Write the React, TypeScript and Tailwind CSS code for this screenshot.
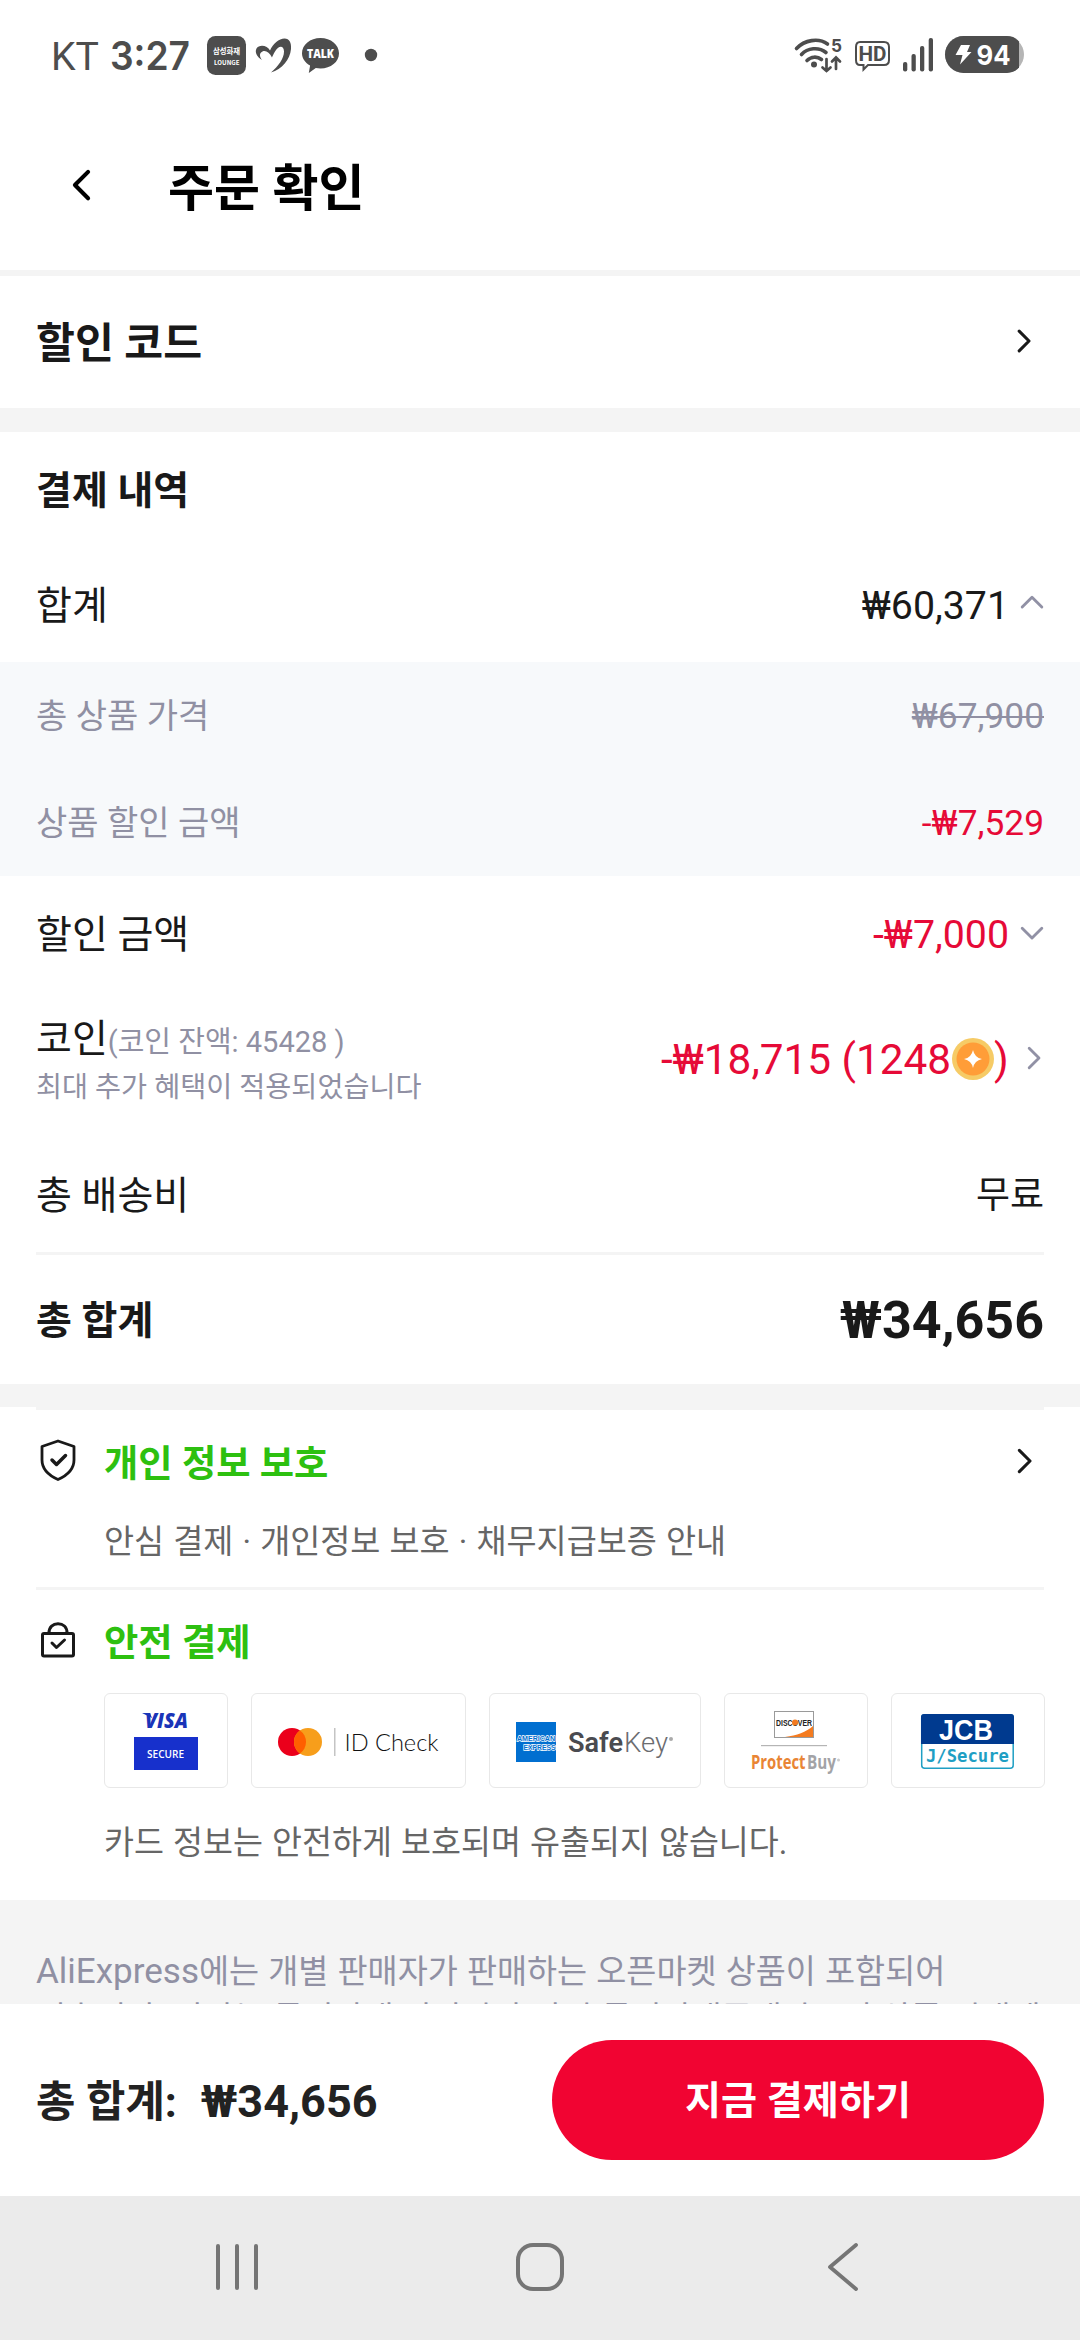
import type { ReactNode } from "react";

const GLYPHS = "spacingAndGlyphs";

type Dir = "left" | "right" | "up" | "down";

const CHEVRON_PATHS: Record<Dir, string> = {
  left: "M11 2 2 11l9 9",
  right: "M2 2l9 9-9 9",
  up: "M2 11l9-9 9 9",
  down: "M2 2l9 9 9-9",
};

function Chevron({ dir, className, stroke = 3 }: { dir: Dir; className?: string; stroke?: number }) {
  const vertical = dir === "up" || dir === "down";
  return (
    <svg viewBox={vertical ? "0 0 22 13" : "0 0 13 22"} fill="none" className={className}>
      <path
        d={CHEVRON_PATHS[dir]}
        stroke="currentColor"
        strokeWidth={stroke}
        strokeLinecap="round"
        strokeLinejoin="round"
      />
    </svg>
  );
}

function StatusBar() {
  return (
    <div className="flex h-[110px] items-center justify-between pl-[48px] pr-[56px] text-[#4d4d4d]">
      <svg width="344" height="64" viewBox="48 23 344 64" fill="#4d4d4d">
        <text x="51" y="69.500" fontSize="39.500" fontWeight="400" textLength="48" lengthAdjust={GLYPHS} fontFamily="Roboto">
          KT
        </text>
        <text x="110" y="69.500" fontSize="39.500" fontWeight="600" textLength="80" lengthAdjust={GLYPHS} fontFamily="Inter">
          3:27
        </text>
        <rect x="207" y="36" width="39" height="39" rx="8.500" />
        <g fill="#fff" fontFamily="'Noto Sans CJK KR', sans-serif" fontWeight="700">
          <text x="213" y="54" fontSize="8" textLength="27" lengthAdjust={GLYPHS}>
            삼성화재
          </text>
          <text x="214" y="65" fontSize="6.500" textLength="25.500" lengthAdjust={GLYPHS}>
            LOUNGE
          </text>
        </g>
        <path d="M262 60c-5-3-7.500-8-5.500-11.500 2.500-4.500 11-3.500 13.500 2 3-7 9-12 14.500-12 5 0 7 4.500 6.500 10.500-1 10.500-9 20.500-20 23.500 7.500-6.500 13-14 13-21 0-6.500-5.500-6.500-9 0-1.500 2.500-2.500 4.500-3 6-2.500-4.500-6-7.500-9.500-6-3.500 1.600-3 5-.5 8.500z" />
        <path d="M320.500 38c10.300 0 18.500 6.600 18.500 15.300s-8.200 15.200-18.500 15.200c-1.600 0-3.200-.1-4.700-.4l-7 5 1.300-7.500c-4.900-2.700-8.100-7.100-8.100-12.300C302 44.600 310.200 38 320.500 38z" />
        <text x="307" y="58" fontSize="12" fontWeight="800" fill="#fff" textLength="27" lengthAdjust={GLYPHS} fontFamily="'Open Sans'">
          TALK
        </text>
        <circle cx="371" cy="55" r="6.200" />
      </svg>
      <svg width="232" height="44" viewBox="792 33 232 44" fill="#4d4d4d">
        <g fill="none" stroke="#4d4d4d" strokeWidth="3.600" strokeLinecap="round">
          <path d="M796.500 48.500c8-8.500 22-11 31-4.500" />
          <path d="M801.500 54.500c6-6.500 17-8 24.500-2" />
          <path d="M807 60.500c4-4 10-4.500 14.500-1" />
          <path d="M826.500 59v12M822.500 67.500l4 3.500 4-3.500M836 69V58M832 61.500l4-4 4 4" strokeWidth="2.700" />
        </g>
        <circle cx="814" cy="64.500" r="3" />
        <text x="831" y="51.500" fontSize="18" fontWeight="700" textLength="11" lengthAdjust={GLYPHS} fontFamily="Inter">
          5
        </text>
        <path
          d="M860 42h24q5 0 5 5v13q0 5-5 5h-16l-4.500 4.500v-4.500H860q-4 0-4-5V47q0-5 4-5z"
          fill="none"
          stroke="#4d4d4d"
          strokeWidth="2"
        />
        <text x="858.500" y="60.500" fontSize="20" fontWeight="700" textLength="28" lengthAdjust={GLYPHS} fontFamily="Roboto">
          HD
        </text>
        <rect x="903" y="62" width="4.300" height="9.500" rx="2" />
        <rect x="911.500" y="54" width="4.300" height="17.500" rx="2" />
        <rect x="920" y="46" width="4.300" height="25.500" rx="2" />
        <rect x="928.700" y="38" width="4.300" height="33.500" rx="2" />
        <rect x="945" y="36" width="79" height="37" rx="18.500" fill="#b5b5b5" />
        <path d="M963.500 36H1007q7.500 0 12 5.500v26q-4.500 5.500-12 5.500h-43.500a18.500 18.500 0 0 1 0-37z" />
        <path d="M961 45h9l-3 7h4.500l-11.500 12.500 2.500-9.500h-7z" fill="#fff" />
        <text x="976.500" y="64.500" fontSize="27" fontWeight="700" fill="#fff" textLength="34" lengthAdjust={GLYPHS} fontFamily="Inter">
          94
        </text>
      </svg>
    </div>
  );
}

function Row({ label, className, children }: { label: ReactNode; className: string; children?: ReactNode }) {
  return (
    <div className={`flex items-center justify-between px-9 ${className}`}>
      <span>{label}</span>
      {children}
    </div>
  );
}

function Coin() {
  return (
    <svg viewBox="0 0 42 42" className="ml-px mb-[3px] h-[42px] w-[42px]">
      <circle cx="21" cy="21" r="21" fill="#f6cb66" />
      <circle cx="21" cy="21" r="16.500" fill="#ff9d38" />
      <path d="M21 12q1.500 7.500 9 9-7.500 1.500-9 9-1.500-7.500-9-9 7.500-1.500 9-9z" fill="#fff" />
    </svg>
  );
}

function ShieldIcon() {
  return (
    <svg viewBox="0 0 36 42" fill="none" stroke="#191919" strokeWidth="2.800" strokeLinejoin="round" strokeLinecap="round" className="h-[42px] w-9">
      <path d="M18 2 34 7.500V21c0 9.500-7 15.500-16 19.500C9 36.500 2 30.500 2 21V7.500z" />
      <path d="M12 21l4.500 4.500 9-9" strokeWidth="3.500" />
    </svg>
  );
}

function LockIcon() {
  return (
    <svg viewBox="0 0 36 36" fill="none" stroke="#191919" strokeWidth="3" strokeLinejoin="round" strokeLinecap="round" className="h-9 w-9">
      <rect x="2.500" y="11.500" width="31" height="22.500" rx="1.500" />
      <path d="M9 11C9 5 13 1.800 18 1.800S27 5 27 11M12 21l4.500 4.500 8-7.500" />
    </svg>
  );
}

function CardBadge({ width, children }: { width: number; children: ReactNode }) {
  return (
    <div className="h-[95px] rounded-md border border-[#e8e8e8]" style={{ width }}>
      <svg width={width - 2} height="93" viewBox={`1 1 ${width - 2} 93`}>
        {children}
      </svg>
    </div>
  );
}

function CardBadges() {
  return (
    <div className="flex justify-between">
      <CardBadge width={124}>
        <path d="M38 20h8l2 5z" fill="#1a34b8" />
        <text x="41" y="35" fontSize="20.500" fontWeight="800" fontStyle="italic" fill="#1a34b8" textLength="43" lengthAdjust={GLYPHS} fontFamily="'Open Sans'">
          VISA
        </text>
        <rect x="30" y="44" width="64" height="33" fill="#1730cc" />
        <text x="43" y="64.500" fontSize="11.500" fontWeight="600" fill="#fff" textLength="37" lengthAdjust={GLYPHS} fontFamily="'Open Sans'">
          SECURE
        </text>
      </CardBadge>
      <CardBadge width={215}>
        <circle cx="41" cy="49" r="14" fill="#eb001b" />
        <circle cx="57" cy="49" r="14" fill="#f79e1b" />
        <path d="M49 37.500a14 14 0 0 1 0 23 14 14 0 0 1 0-23z" fill="#ff5f00" />
        <rect x="83" y="35" width="1.500" height="28" fill="#c4c4c4" />
        <text x="93.500" y="57.500" fontSize="23.500" fontWeight="300" fill="#111" textLength="94" lengthAdjust={GLYPHS} fontFamily="Lato">
          ID Check
        </text>
      </CardBadge>
      <CardBadge width={212}>
        <rect x="27" y="29" width="40" height="40" fill="#016fd0" />
        <g fill="#016fd0" stroke="#fff" strokeWidth="1.300" paintOrder="stroke" fontFamily="'Liberation Sans'" fontWeight="700" fontSize="7">
          <text x="28" y="47.500" textLength="38" lengthAdjust={GLYPHS}>
            AMERICAN
          </text>
          <text x="34.500" y="57" textLength="32" lengthAdjust={GLYPHS}>
            EXPRESS
          </text>
        </g>
        <text x="79" y="59" fontSize="28" fontWeight="600" fill="#4a4b50" textLength="55" lengthAdjust={GLYPHS} fontFamily="Roboto">
          Safe
        </text>
        <text x="135" y="59" fontSize="28" fontWeight="300" fill="#6b6c70" textLength="44" lengthAdjust={GLYPHS} fontFamily="Roboto">
          Key
        </text>
        <circle cx="182" cy="46" r="2" fill="#aaa" />
      </CardBadge>
      <CardBadge width={144}>
        <rect x="50.500" y="18.500" width="39" height="26" fill="#fff" stroke="#9a9a9a" />
        <path d="M89 33v11H61c12-1.500 21-5 28-11z" fill="#f47b20" />
        <text x="52" y="32.500" fontSize="8.500" fontWeight="700" fill="#222" textLength="36" lengthAdjust={GLYPHS} fontFamily="'Liberation Sans'">
          DISCOVER
        </text>
        <circle cx="71" cy="29.500" r="3" fill="#f47b20" />
        <rect x="37" y="52" width="66" height="1.200" fill="#b5b5b5" />
        <text x="27" y="75.500" fontSize="19.500" fontWeight="700" fill="#e98535" textLength="54.500" lengthAdjust={GLYPHS} fontFamily="'Open Sans'">
          Protect
        </text>
        <text x="83" y="75.500" fontSize="19.500" fontWeight="700" fill="#a3a3a6" textLength="29" lengthAdjust={GLYPHS} fontFamily="'Open Sans'">
          Buy
        </text>
        <circle cx="114.500" cy="67" r="1.500" fill="#ccc" />
      </CardBadge>
      <CardBadge width={154}>
        <rect x="30.700" y="21.700" width="91.500" height="53.500" rx="3" fill="#fff" stroke="#1f9fc4" strokeWidth="1.500" />
        <path d="M30 51V24q0-3 3-3h87q3 0 3 3v27z" fill="#003a8f" />
        <text x="48" y="47" fontSize="29" fontWeight="700" fill="#fff" textLength="54" lengthAdjust={GLYPHS} fontFamily="'Liberation Sans'">
          JCB
        </text>
        <text x="35" y="69" fontSize="18" fontWeight="700" fill="#1f9fc4" textLength="83" lengthAdjust={GLYPHS} fontFamily="'DejaVu Sans Mono'">
          J/Secure
        </text>
      </CardBadge>
    </div>
  );
}

function PaymentSummary() {
  return (
    <section className="text-[39px] leading-[48px]">
      <Row label="결제 내역" className="h-[116px] pt-px font-bold" />
      <Row label="합계" className="h-[114px] pt-[2px]">
        <div className="flex items-center">
          <span className="text-[39.300px]">₩60,371</span>
          <Chevron dir="up" className="mb-[7px] ml-[11px] w-6 text-[#9191a5]" stroke={2.6} />
        </div>
      </Row>
      <div className="bg-[#f7f9fb] text-[34px] text-[#9090a3]">
        <Row label="총 상품 가격" className="h-[107px]">
          <span className="text-[35.300px] line-through decoration-2">₩67,900</span>
        </Row>
        <Row label="상품 할인 금액" className="h-[107px]">
          <span className="text-[35.300px] text-[#e60a37]">-₩7,529</span>
        </Row>
      </div>
      <Row label="할인 금액" className="h-[114px] pt-[4px]">
        <div className="flex items-center">
          <span className="text-[39.300px] text-[#e60a37]">-₩7,000</span>
          <Chevron dir="down" className="mb-[4px] ml-[11px] w-6 text-[#9191a5]" stroke={2.6} />
        </div>
      </Row>
      <div className="flex h-36 items-start justify-between px-9 pt-6">
        <div>
          <p className="leading-[50px]">
            코인<span className="text-[29px] text-[#9090a3]">(코인 잔액: 45428 )</span>
          </p>
          <p className="-mt-1 text-[28.300px] leading-[50px] text-[#9090a3]">최대 추가 혜택이 적용되었습니다</p>
        </div>
        <div className="flex items-center pr-[3px] pt-[22px]">
          <span className="text-[42.300px] text-[#e60a37]">-₩18,715 (1248</span>
          <Coin />
          <span className="text-[42.300px] text-[#e60a37]">)</span>
          <Chevron dir="right" className="mb-[4px] ml-[18px] h-6 text-[#9191a5]" stroke={2.6} />
        </div>
      </div>
      <Row label="총 배송비" className="h-[118px] pt-[6px]">
        <span className="text-[37px]">무료</span>
      </Row>
      <div className="mx-9 h-[3px] bg-[#f4f4f4]" />
      <Row label="총 합계" className="h-[129px] pt-[3px] font-bold">
        <span className="text-[52px]">₩34,656</span>
      </Row>
    </section>
  );
}

function Guarantees() {
  return (
    <section>
      <div className="mx-9 h-[3px] bg-[#f4f4f4]" />
      <div className="flex h-[177px] px-9 pt-[29px]">
        <div className="w-[68px] pl-1">
          <ShieldIcon />
        </div>
        <div className="flex-1">
          <div className="flex items-center justify-between pr-3">
            <h2 className="text-[37.300px] font-bold leading-[50px] text-[#2dc010]">개인 정보 보호</h2>
            <Chevron dir="right" className="mb-[6px] h-[26px]" stroke={2.6} />
          </div>
          <p className="mt-7 text-[32.700px] leading-[50px] text-[#666] [word-spacing:1px]">
            안심 결제 · 개인정보 보호 · 채무지급보증 안내
          </p>
        </div>
      </div>
      <div className="mx-9 h-[3px] bg-[#f4f4f4]" />
      <div className="flex h-[310px] pl-9 pr-[35px] pt-[28px]">
        <div className="w-[68px] pl-1 pt-[4px]">
          <LockIcon />
        </div>
        <div className="flex-1">
          <h2 className="mb-[25px] text-[37.300px] font-bold leading-[50px] text-[#2dc010]">안전 결제</h2>
          <CardBadges />
          <p className="mt-[30px] text-[32.600px] leading-[50px] text-[#666] [word-spacing:1px]">
            카드 정보는 안전하게 보호되며 유출되지 않습니다.
          </p>
        </div>
      </div>
    </section>
  );
}

function PayBar() {
  return (
    <div className="flex h-48 items-center justify-between px-9">
      <p className="flex items-baseline pt-[3px] font-bold leading-[60px] text-[#222]">
        <span className="text-[42.800px]">총 합계:</span>
        <span className="ml-6 text-[45px]">₩34,656</span>
      </p>
      <button className="h-[120px] w-[492px] rounded-full bg-[#f10432] pt-[3px] text-[39.200px] font-bold text-white">
        지금 결제하기
      </button>
    </div>
  );
}

function NavBar() {
  return (
    <div className="flex h-36 items-center justify-between bg-[#ebebeb] pb-[2px] pl-[216px] pr-[222px] text-[#757575]">
      <div className="flex gap-[15px]">
        <span className="h-[46px] w-1 rounded-full bg-[#757575]" />
        <span className="h-[46px] w-1 rounded-full bg-[#757575]" />
        <span className="h-[46px] w-1 rounded-full bg-[#757575]" />
      </div>
      <div className="mr-[6px] h-12 w-12 rounded-[17px] border-4 border-[#757575]" />
      <svg viewBox="0 0 31 48" fill="none" className="h-12">
        <path d="M29 2 3 24l26 22" stroke="currentColor" strokeWidth="3.800" strokeLinecap="round" strokeLinejoin="round" />
      </svg>
    </div>
  );
}

export default function App() {
  return (
    <div className="flex h-[2340px] w-[1080px] flex-col overflow-hidden bg-white font-[Roboto,'Noto_Sans_CJK_KR',sans-serif] text-[#191919]">
      <StatusBar />
      <header className="flex h-40 items-center pb-[2px] pl-[72px] text-black">
        <Chevron dir="left" className="mb-[7px] w-[19px]" stroke={2.8} />
        <h1 className="ml-[77px] text-[50px] font-bold leading-[60px]">주문 확인</h1>
      </header>
      <div className="h-[6px] bg-[#f4f4f4]" />
      <Row label="할인 코드" className="h-[132px] pt-[3px] text-[42.300px] font-bold">
        <Chevron dir="right" className="mb-[5px] mr-[13px] h-6" stroke={2.8} />
      </Row>
      <div className="h-6 bg-[#f4f4f4]" />
      <PaymentSummary />
      <div className="h-[23px] bg-[#f4f4f4]" />
      <Guarantees />
      <div className="h-[104px] overflow-hidden bg-[#f4f4f4] px-9 pt-12 text-[32.700px] leading-[47px] text-[#9090a3] [word-spacing:1px]">
        <p className="whitespace-nowrap">
          <span className="text-[35px]">AliExpress</span>에는 개별 판매자가 판매하는 오픈마켓 상품이 포함되어
        </p>
        <p className="whitespace-nowrap">있습니다. 당사는 통신판매 당사자가 아닌 통신판매중개자로서 상품 거래에</p>
      </div>
      <PayBar />
      <NavBar />
    </div>
  );
}
